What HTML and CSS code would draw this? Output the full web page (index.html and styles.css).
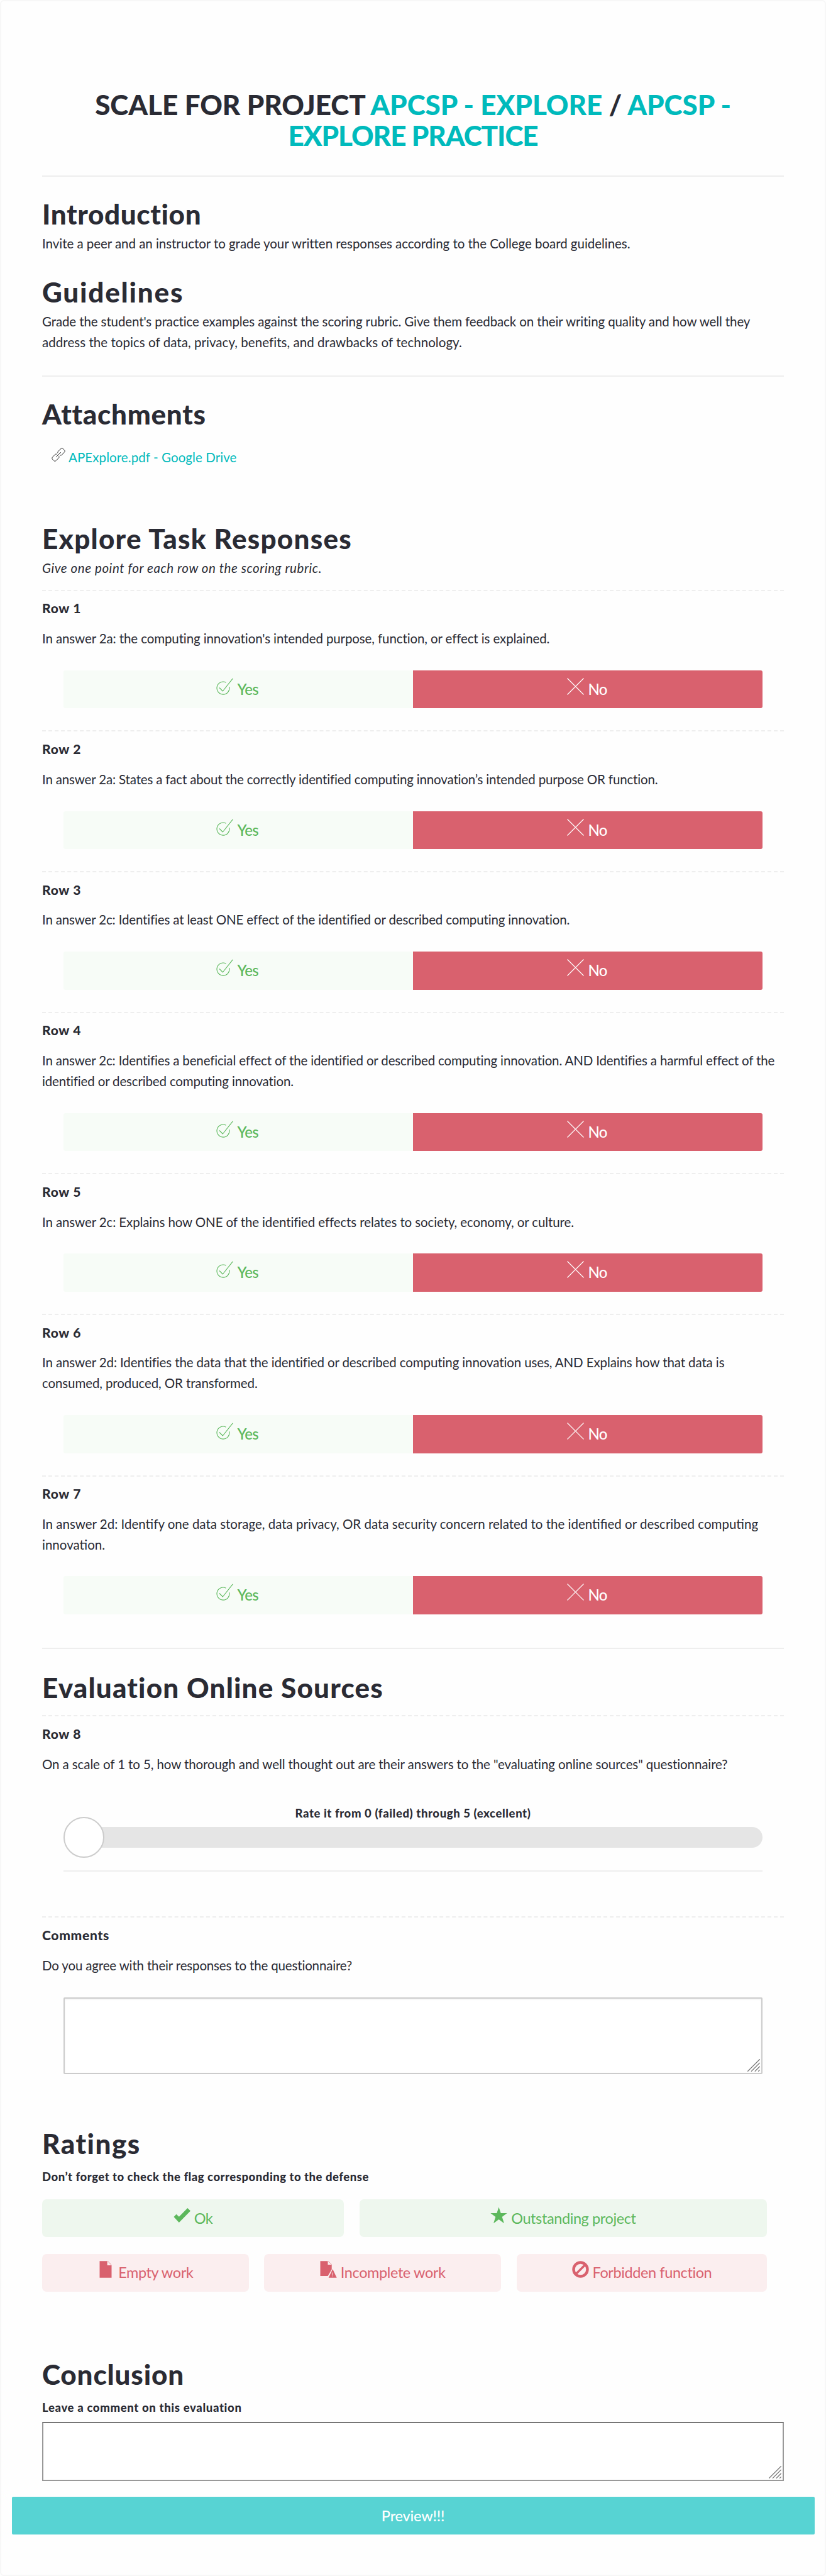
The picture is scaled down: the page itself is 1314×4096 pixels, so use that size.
FILE: index.html
```html
<!DOCTYPE html>
<html lang="en">
<head>
<meta charset="utf-8">
<title>Scale for project APCSP - Explore</title>
<link rel="stylesheet" href="styles.css">
</head>
<body>
<svg class="sprite" aria-hidden="true">
  <symbol id="i-yes" viewBox="0 0 27 27"><path d="M15.5 7.2A10 10 0 1 0 20.8 14.2M5 15.5 10.3 21 26.3.8" fill="none" stroke="currentColor" stroke-width="1.1"/></symbol>
  <symbol id="i-no" viewBox="0 0 27 27"><path d="M.5.5l26 26M26.5.5l-26 26" fill="none" stroke="currentColor" stroke-width="1.1"/></symbol>
  <symbol id="i-link" viewBox="0 0 22 22"><g fill="none" stroke="currentColor" stroke-width="1" stroke-linejoin="round"><path d="M10 8.500C9.600 7.300 9.800 6.500 10.500 5.800L14.200 2C15.500.6 17 .3 18.200 1.500L20.300 3.600C21.600 4.900 21.300 6.200 20.100 7.500L16.300 11.200C15.400 12.100 14.300 12.300 13.200 11.700"/><path d="M8.700 10.200C7.500 9.700 6.600 9.900 5.700 10.700L1.900 14.500C.6 15.900.4 17.200 1.600 18.400L3.600 20.400C4.900 21.700 6.200 21.400 7.500 20.100L11.200 16.400C12.100 15.500 12.300 14.500 11.700 13.300"/><path d="M7.200 14.800 14.800 7.200"/></g></symbol>
  <symbol id="i-check" viewBox="0 0 27 27"><path d="M.5 16 4.500 11.700 8.800 15.700 22.300 2 27 6.500 8.800 25z" fill="currentColor"/></symbol>
  <symbol id="i-star" viewBox="0 0 27 27"><path d="M13.500.5 16.700 10H26.700L18.700 16 21.900 26.300 13.500 20 5.100 26.300 8.300 16 .3 10H10.300z" fill="currentColor"/></symbol>
  <symbol id="i-doc" viewBox="0 0 27 27"><path d="M3.500.3H15.600V7H22.500V26.700H3.500z" fill="currentColor"/><path d="M16.300.5 22.300 6.400" stroke="currentColor" stroke-width=".7"/></symbol>
  <symbol id="i-docwarn" viewBox="0 0 27 27"><path d="M.5.3H12.500V6H18.700V13.500L12.500 24H.5z" fill="currentColor"/><path d="M13.200.5 18.500 5.500" stroke="currentColor" stroke-width=".7"/><path d="M20.200 12.900 26.700 26.700H13.700z" fill="currentColor"/><path d="M20.200 18.500v4M20.200 23.400v1.200" stroke="#fbeeef" stroke-width="1"/></symbol>
  <symbol id="i-ban" viewBox="0 0 27 27"><circle cx="13.500" cy="13.500" r="11" fill="none" stroke="currentColor" stroke-width="4.400"/><path d="M6.500 20.500 20.500 6.500" stroke="currentColor" stroke-width="3.400"/></symbol>
  <symbol id="i-grip" viewBox="0 0 20 20"><path d="M.3 19.700 19.700.3M6 19.700 19.700 6M11.800 19.700 19.700 11.800M17.200 19.700 19.700 17.200" stroke="#777" stroke-width="1.300"/></symbol>
</svg>
<main class="page">
  <h1 class="title"><span class="line-a">SCALE FOR PROJECT <a>APCSP - EXPLORE</a> / <a>APCSP -</a></span><br><a class="line-b">EXPLORE PRACTICE</a></h1>
  <hr class="rule rule-title">

  <section class="intro">
    <h2 class="h-intro">Introduction</h2>
    <p class="t-invite">Invite a peer and an instructor to grade your written responses according to the College board guidelines.</p>
  </section>
  <section class="guide">
    <h2 class="h-guide">Guidelines</h2>
    <p>Grade the student's practice examples against the scoring rubric. Give them feedback on their writing quality and how well they<br><span class="t-address">address the topics of data, privacy, benefits, and drawbacks of technology.</span></p>
  </section>
  <hr class="rule rule-guide">

  <section class="attach">
    <h2 class="h-attach">Attachments</h2>
    <p class="file"><svg class="link-icon"><use href="#i-link"/></svg><a>APExplore.pdf - Google Drive</a></p>
  </section>

  <section class="responses">
    <h2 class="h-resp">Explore Task Responses</h2>
    <p class="note">Give one point for each row on the scoring rubric.</p>

    <div class="row">
      <h3>Row 1</h3>
      <p>In answer 2a: the computing innovation's intended purpose, function, or effect is explained.</p>
      <div class="choice"><span class="yes"><svg><use href="#i-yes"/></svg>Yes</span><span class="no"><svg><use href="#i-no"/></svg>No</span></div>
    </div>
    <div class="row">
      <h3>Row 2</h3>
      <p class="t-tight">In answer 2a: States a fact about the correctly identified computing innovation’s intended purpose OR function.</p>
      <div class="choice"><span class="yes"><svg><use href="#i-yes"/></svg>Yes</span><span class="no"><svg><use href="#i-no"/></svg>No</span></div>
    </div>
    <div class="row">
      <h3>Row 3</h3>
      <p class="t-tight">In answer 2c: Identifies at least ONE effect of the identified or described computing innovation.</p>
      <div class="choice"><span class="yes"><svg><use href="#i-yes"/></svg>Yes</span><span class="no"><svg><use href="#i-no"/></svg>No</span></div>
    </div>
    <div class="row">
      <h3>Row 4</h3>
      <p class="t-tight">In answer 2c: Identifies a beneficial effect of the identified or described computing innovation. AND Identifies a harmful effect of the<br>identified or described computing innovation.</p>
      <div class="choice"><span class="yes"><svg><use href="#i-yes"/></svg>Yes</span><span class="no"><svg><use href="#i-no"/></svg>No</span></div>
    </div>
    <div class="row">
      <h3>Row 5</h3>
      <p>In answer 2c: Explains how ONE of the identified effects relates to society, economy, or culture.</p>
      <div class="choice"><span class="yes"><svg><use href="#i-yes"/></svg>Yes</span><span class="no"><svg><use href="#i-no"/></svg>No</span></div>
    </div>
    <div class="row">
      <h3>Row 6</h3>
      <p>In answer 2d: Identifies the data that the identified or described computing innovation uses, AND Explains how that data is<br>consumed, produced, OR transformed.</p>
      <div class="choice"><span class="yes"><svg><use href="#i-yes"/></svg>Yes</span><span class="no"><svg><use href="#i-no"/></svg>No</span></div>
    </div>
    <div class="row">
      <h3>Row 7</h3>
      <p class="t-loose">In answer 2d: Identify one data storage, data privacy, OR data security concern related to the identified or described computing<br>innovation.</p>
      <div class="choice"><span class="yes"><svg><use href="#i-yes"/></svg>Yes</span><span class="no"><svg><use href="#i-no"/></svg>No</span></div>
    </div>
  </section>
  <hr class="rule rule-resp">

  <section class="sources">
    <h2 class="h-eval">Evaluation Online Sources</h2>
    <div class="row row-slider">
      <h3>Row 8</h3>
      <p class="t-scale">On a scale of 1 to 5, how thorough and well thought out are their answers to the "evaluating online sources" questionnaire?</p>
      <div class="slider">
        <span class="label">Rate it from 0 (failed) through 5 (excellent)</span>
        <div class="track"><span class="knob"></span></div>
        <hr class="rule">
      </div>
    </div>
    <div class="row row-comments">
      <h3>Comments</h3>
      <p class="t-tight">Do you agree with their responses to the questionnaire?</p>
      <div class="field field-soft"><textarea></textarea><svg class="grip"><use href="#i-grip"/></svg></div>
    </div>
  </section>

  <section class="ratings">
    <h2 class="h-rate">Ratings</h2>
    <p class="label">Don’t forget to check the flag corresponding to the defense</p>
    <div class="flags good"><span><svg><use href="#i-check"/></svg>Ok</span><span><svg><use href="#i-star"/></svg>Outstanding project</span></div>
    <div class="flags bad"><span><svg><use href="#i-doc"/></svg>Empty work</span><span><svg><use href="#i-docwarn"/></svg>Incomplete work</span><span><svg><use href="#i-ban"/></svg>Forbidden function</span></div>
  </section>

  <section class="conclusion">
    <h2 class="h-concl">Conclusion</h2>
    <p class="label">Leave a comment on this evaluation</p>
    <div class="field field-dark"><textarea></textarea><svg class="grip"><use href="#i-grip"/></svg></div>
  </section>
  <button class="preview" type="button">Preview!!!</button>
</main>
</body>
</html>
```

FILE: styles.css
```css
* { box-sizing: border-box; }
body { margin: 0; background: #fefefe; }
.sprite { display: none; }
.page {
  width: 1314px; height: 4096px; padding: 139.600px 65px 0;
  border: 2px solid #f7f7f7; border-radius: 6px;
  font: 20.500px/32.800px Lato, "Liberation Sans", sans-serif;
  letter-spacing: -.11px; color: #2a2b34;
}
h1, h2, h3, p { margin: 0; }
a { color: #00babc; }
.rule { height: 2px; margin: 0; border: 0; background: #eee; }

.title { font-size: 44px; line-height: 49.800px; text-align: center; font-weight: 900; }
.line-a { letter-spacing: -.05px; }
.line-b { letter-spacing: -1.050px; }
.rule-title { margin-top: 37.800px; }

h2 { font-size: 44px; line-height: 50px; font-weight: 900; white-space: nowrap; }
.h-intro { letter-spacing: .65px; }
.h-guide { letter-spacing: 1.800px; }
.h-attach { letter-spacing: .7px; }
.h-resp { letter-spacing: 1.250px; }
.h-eval { letter-spacing: 1.170px; }
.h-rate { letter-spacing: 1.500px; }
.h-concl { letter-spacing: .85px; }
p { white-space: nowrap; }

.intro { padding-top: 34.200px; }
.intro p, .guide p, .note { margin-top: 5.700px; }
.t-invite { letter-spacing: -.04px; }
.t-address { letter-spacing: .05px; }
.t-tight { letter-spacing: -.16px; }
.t-loose { letter-spacing: 0; }
.t-scale { letter-spacing: -.1px; }
.guide { padding-top: 35.500px; }
.rule-guide { margin-top: 36.500px; }

.attach { padding-top: 34.200px; }
.file { display: flex; margin-top: 27.700px; padding-left: 14.500px; gap: 5.500px; letter-spacing: .08px; }
.link-icon { width: 22px; height: 22px; margin-top: 1px; color: #222; }

.responses { padding-top: 87.500px; }
.note { margin-bottom: 18.100px; font-style: italic; letter-spacing: .57px; }

.row { border-top: 2px dashed #eee; padding: 11.500px 0 34.950px; }
h3 { font-size: 21px; line-height: 32px; font-weight: 900; letter-spacing: .7px; margin-bottom: 15.800px; }
.choice { display: grid; grid-template-columns: 1fr 1fr; margin: 34px 33.600px 0; border-radius: 3px; overflow: hidden; }
.choice span, .flags span { display: flex; justify-content: center; align-items: baseline; gap: 6px; }
.choice span { height: 60.700px; font-size: 24px; line-height: 60.700px; letter-spacing: -.6px; font-weight: 500; }
.choice svg, .flags svg { width: 27px; height: 27px; flex: none; }
.choice svg { margin-left: -2px; }
.yes { background: #f7fcf7; color: #5cb85c; }
.no { background: #d9616e; color: #fff; }

.rule-resp { margin-top: 17.800px; }
.sources { padding-top: 35.600px; }
.row-slider { margin-top: 19.900px; padding-bottom: 70.900px; }
.label { display: block; font-size: 18.500px; line-height: 24px; font-weight: 900; letter-spacing: .6px; }
.slider { margin: 49.200px 33.600px 0; }
.slider .label { text-align: center; }
.track { position: relative; height: 32.500px; margin: 10.800px 0 36.500px; border-radius: 17px; background: #e5e5e5; }
.knob { position: absolute; left: 0; top: -16.200px; width: 65px; height: 65px; border: 2px solid #ccc; border-radius: 50%; background: #fff; }
.row-comments { padding-bottom: 0; }
.field { position: relative; display: flex; }
.field textarea { width: 100%; height: 100%; margin: 0; resize: none; background: #fff; }
.field .grip { position: absolute; right: 4px; bottom: 4px; width: 20px; height: 20px; }
.field-soft { height: 122.500px; margin: 34.200px 33.600px 0; }
.field-soft textarea { border: 2px solid #ccc; border-radius: 2px; box-shadow: inset 0 1px 3px #0001; }

.ratings { padding-top: 84.700px; }
.ratings .label { margin-top: 16px; letter-spacing: .52px; }
.flags { display: grid; column-gap: 24.700px; margin-right: 27px; font-size: 23.500px; letter-spacing: -.4px; }
.flags span { border-radius: 7px; }
.good { grid-template-columns: 480px 1fr; margin-top: 23.700px; line-height: 61px; color: #5cb85c; }
.good span { height: 60.700px; background: #eef7ee; }
.bad { grid-template-columns: 328.500px 377px 1fr; margin-top: 26.300px; line-height: 59px; color: #d9616e; }
.bad span { height: 60px; background: #fbeeef; }

.conclusion { padding-top: 106.500px; }
.conclusion .label { margin-top: 16px; letter-spacing: .66px; }
.field-dark { height: 93.600px; margin-top: 11.200px; }
.field-dark textarea { border: 2px solid #999; border-top-color: #767676; border-radius: 0; }
.preview {
  display: block; width: 1277px; height: 60.300px; margin: 25.400px 0 0 -48.500px; padding: 0;
  border: 0; border-radius: 2px; background: #57d3d3; color: #fff;
  font: 500 23.500px/60px Lato, "Liberation Sans", sans-serif; letter-spacing: -.2px;
}
```
